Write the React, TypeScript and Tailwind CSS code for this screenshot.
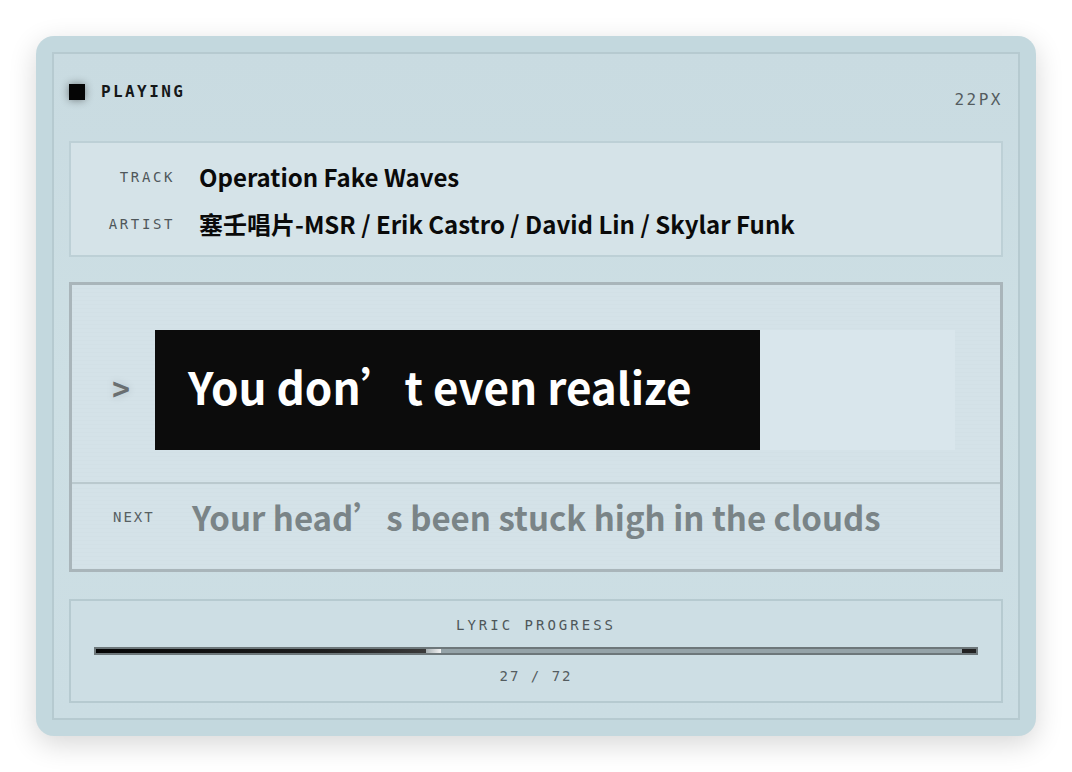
export default function App() {
  const mono = "font-['DejaVu_Sans_Mono','Liberation_Mono',monospace]";
  const sans = "font-['Noto_Sans_CJK_SC','Noto_Sans',sans-serif]";
  const current = 27;
  const total = 72;

  return (
    <div className="flex h-[772px] w-full items-center justify-center bg-white">
      <div className="h-[700px] w-[1000px] rounded-[18px] bg-[#c3d8de] p-4 shadow-[0_8px_28px_rgba(0,0,0,0.16)]">
        <div className="flex h-full flex-col border-2 border-[#b6cad0] bg-[linear-gradient(180deg,#c9dbe1,#cddfe4_50%,#cbdde3)] px-[15px]">
          {/* header */}
          <div className="flex h-[87px] justify-between pt-[30px]">
            <div className="flex h-4 items-center gap-4">
              <div className="h-4 w-4 bg-[#050505] shadow-[0_0_8px_rgba(0,0,0,0.45)]" />
              <span className={`${mono} text-[16px] font-bold tracking-[2.4px] text-[#151819]`}>PLAYING</span>
            </div>
            <span className={`${mono} mt-[4px] text-[16px] tracking-[2.5px] text-[#545c5f]`}>22PX</span>
          </div>

          {/* track info */}
          <div className="flex flex-col gap-[11px] border-2 border-[#bdd0d6] bg-[#d5e3e8] pt-4 pb-[13px]">
            <div className="flex h-9 items-center gap-6">
              <span className={`${mono} w-[104px] text-right text-[14px] tracking-[2.6px] text-[#4f575a]`}>TRACK</span>
              <span className={`${sans} text-[24px] font-bold text-[#0a0a0a]`}>Operation Fake Waves</span>
            </div>
            <div className="flex h-9 items-center gap-6">
              <span className={`${mono} w-[104px] text-right text-[14px] tracking-[2.6px] text-[#4f575a]`}>ARTIST</span>
              <span className={`${sans} text-[24px] font-bold text-[#0a0a0a]`}>塞壬唱片-MSR / Erik Castro / David Lin / Skylar Funk</span>
            </div>
          </div>

          {/* lyrics */}
          <div className="mt-[25px] flex flex-col border-[3px] border-[#a9b5ba] bg-[repeating-linear-gradient(180deg,#d4e2e8_0px,#d4e2e8_3px,#d2e0e6_3px,#d2e0e6_4px)]">
            <div className="flex pt-[45px] pb-[32px]">
              <div className="flex w-[83px] items-center pb-1 pl-[40px]">
                <span className={`${mono} text-[30px] font-bold text-[#6a6f71] [text-shadow:0_0_8px_rgba(0,0,0,0.15)]`}>&gt;</span>
              </div>
              <div className="flex h-[120px] w-[800px] bg-[#d9e6ec]">
                <div className="flex h-full w-[605px] items-center bg-[#0c0c0c] pb-[8px] pl-[33px]">
                  <span className={`${sans} text-[44px] font-bold text-white`}>You don’t even realize</span>
                </div>
              </div>
            </div>
            <div className="h-[2px] bg-[#bac9ce]" />
            <div className="flex h-[85px] items-start pt-[11px]">
              <div className="flex h-11 w-[83px] items-center pl-[41px]">
                <span className={`${mono} text-[14px] tracking-[2px] text-[#575f62]`}>NEXT</span>
              </div>
              <span className={`${sans} h-11 pl-[37px] text-[33px] leading-[44px] font-bold text-[#7a8487]`}>Your head’s been stuck high in the clouds</span>
            </div>
          </div>

          {/* progress */}
          <div className="mt-[27px] flex flex-col items-center border-2 border-[#b6cad0] bg-[#cddee4] px-[23px] pt-[14px] pb-[15px]">
            <span className={`${mono} text-[14px] leading-5 tracking-[3px] text-[#4f575a]`}>LYRIC PROGRESS</span>
            <div className="mt-3 flex h-2 w-full border-2 border-[#6d777a] bg-[#95a3a8]">
              <div
                className="h-full bg-[linear-gradient(90deg,#050505,#1e1e1e_70%,#3a3a3a)]"
                style={{ width: `${(current / total) * 100}%` }}
              />
              <div className="h-full w-[15px] bg-[linear-gradient(90deg,#a7b0b3,#f2f2f2)]" />
              <div className="flex-1" />
              <div className="h-full w-[14px] bg-[#222]" />
            </div>
            <span className={`${mono} mt-[11px] text-[14px] leading-5 tracking-[2px] text-[#545c5f]`}>
              {current} / {total}
            </span>
          </div>
        </div>
      </div>
    </div>
  );
}
